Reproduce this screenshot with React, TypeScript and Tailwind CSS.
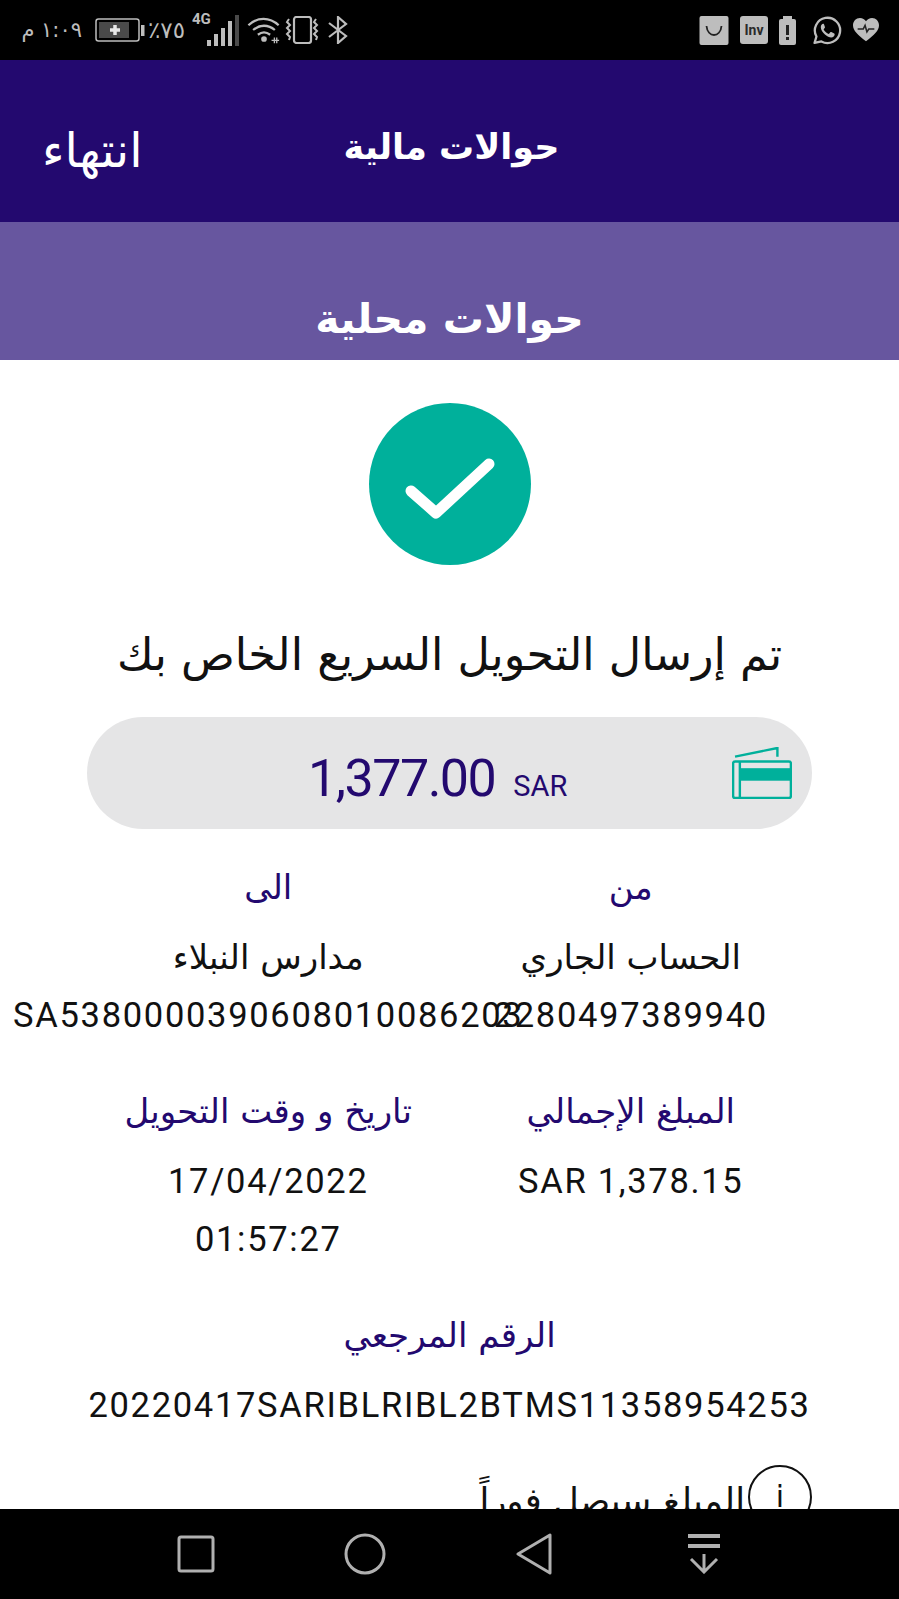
const ar = "font-['DejaVu_Sans',sans-serif]";
const din = "font-['Roboto','DejaVu_Sans',sans-serif]";

function StatusLeft() {
  return (
    <div className="flex items-center">
      <span className={`${ar} ml-[20px] w-[62px] text-[21px] leading-none text-[#bdbdbd] whitespace-nowrap`} dir="rtl">١:٠٩ م</span>
      <svg className="ml-[13px] shrink-0" width="50" height="26" viewBox="0 0 50 26">
        <rect x="1" y="2" width="43" height="22" rx="2.5" fill="none" stroke="#bdbdbd" strokeWidth="1.5" />
        <rect x="4" y="5" width="30" height="16" fill="#4a4a4a" />
        <path d="M20 8v10M15 13h10" stroke="#e8e8e8" strokeWidth="3.5" />
        <rect x="46" y="8" width="3.5" height="11" fill="#bdbdbd" />
      </svg>
      <span className={`${ar} ml-[3px] w-[42px] text-[23px] leading-none text-[#bdbdbd] whitespace-nowrap`}>٪٧٥</span>
      <div className="relative ml-[2px] h-[32px] w-[46px] shrink-0">
        <span className={`${din} absolute left-0 top-[-2px] text-[15px] font-bold leading-none text-[#bdbdbd]`}>4G</span>
        <svg className="absolute left-0 top-0" width="48" height="32" viewBox="0 0 48 32">
          <rect x="15" y="26" width="4" height="6" fill="#bdbdbd" />
          <rect x="22" y="20" width="4" height="12" fill="#bdbdbd" />
          <rect x="29" y="14" width="4" height="18" fill="#bdbdbd" />
          <rect x="36" y="7" width="4" height="25" fill="#bdbdbd" />
          <rect x="43" y="1" width="4" height="31" fill="#4a4a4a" />
        </svg>
      </div>
      <svg className="ml-[9px] shrink-0" width="34" height="28" viewBox="0 0 36 28" fill="none" stroke="#bdbdbd" strokeWidth="2.4">
        <path d="M1.500 9C11 0 24 0 33.500 9M6.500 14c7-6 16-6 23 0M11.500 19c4-3 9-3 13 0" />
        <circle cx="18" cy="23.500" r="3" fill="#bdbdbd" stroke="none" />
        <path d="M26 25h8M29 22v6M31.500 22v6" strokeWidth="1.400" />
      </svg>
      <svg className="ml-[4px] shrink-0" width="36" height="28" viewBox="0 0 36 28" fill="none" stroke="#bdbdbd" strokeWidth="2">
        <rect x="9" y="1" width="17" height="26" rx="2.500" strokeWidth="2.200" />
        <path d="M4 3l-2 3 3 3-3 3 3 3-3 3 3 3-1 3M31 3l-2 3 3 3-3 3 3 3-3 3 3 3-1 3" />
      </svg>
      <svg className="ml-[7px] shrink-0" width="20" height="28" viewBox="0 0 20 28" fill="none" stroke="#bdbdbd" strokeWidth="2.200">
        <path d="M1 7l17 13-8 7V1l8 7L1 21" />
      </svg>
    </div>
  );
}

function StatusRight() {
  return (
    <div className="mr-[20px] flex items-center gap-[11px]">
      <svg width="30" height="29" viewBox="0 0 29 29">
        <rect width="29" height="29" rx="2" fill="#bdbdbd" />
        <path d="M7 10c1 12 14 12 15 0" fill="none" stroke="#222" strokeWidth="1.800" />
      </svg>
      <div className={`${din} flex h-[28px] w-[28px] items-center justify-center rounded-[3px] bg-[#bdbdbd] text-[14px] font-bold leading-none text-[#2a2a2a]`}>Inv</div>
      <svg width="17" height="29" viewBox="0 0 17 29">
        <rect x="0" y="3" width="17" height="26" rx="2" fill="#bdbdbd" />
        <rect x="4" y="0" width="9" height="3" fill="#bdbdbd" />
        <rect x="7" y="9" width="3" height="10" fill="#222" />
        <rect x="7" y="21" width="3" height="3" fill="#222" />
      </svg>
      <svg className="ml-[5px]" width="30" height="29" viewBox="0 0 28 28" fill="none">
        <path d="M2 26l1.800-6.200A12.200 12.200 0 1 1 8.600 24.600z" stroke="#bdbdbd" strokeWidth="2.200" strokeLinejoin="round" />
        <path d="M10.200 7.600c-.9 0-2.200 1.200-2.200 3.200 0 2.400 1.700 4.900 4 7 2.200 2 4.300 2.900 6 2.900 2 0 3.400-1.500 3.400-2.800 0-.5-.1-.8-.4-1l-2.800-1.400c-.4-.2-.7-.1-1 .2l-1.200 1.400c-.2.300-.5.300-.9.100-1.700-.8-3.200-2.200-4.200-3.900-.2-.3-.1-.6.100-.8l.9-1.100c.2-.3.200-.6.100-.9L11.100 8c-.2-.3-.5-.4-.9-.4z" fill="#bdbdbd" />
      </svg>
      <svg width="26" height="26" viewBox="0 0 28 26">
        <path d="M14 25C5 18 0 13.500 0 7.800 0 3.400 3.300 0 7.500 0 10.200 0 12.700 1.400 14 3.600 15.300 1.400 17.800 0 20.500 0 24.700 0 28 3.400 28 7.800 28 13.500 23 18 14 25z" fill="#bdbdbd" />
        <path d="M5 12h6l2-4 2 7 2-3h6" fill="none" stroke="#222" strokeWidth="1.700" />
      </svg>
    </div>
  );
}

function Info({ label, lines }: { label: string; lines: string[] }) {
  return (
    <div className="flex min-w-0 flex-col items-center">
      <div className={`${ar} h-[40px] text-[34px] leading-[40px] text-[#23096f] whitespace-nowrap`} dir="rtl">{label}</div>
      <div className="mt-[21px] flex w-full flex-col items-center">
        {lines.map((l) => {
          const latin = /[a-zA-Z0-9]/.test(l);
          return (
            <div key={l} className="flex h-[58px] w-full items-center justify-center leading-[58px] text-[#111] whitespace-nowrap">
              <span className={latin ? `${din} text-[34.5px] tracking-[1.7px]` : `${ar} text-[34px]`} dir={latin ? "ltr" : "rtl"}>{l}</span>
            </div>
          );
        })}
      </div>
    </div>
  );
}

export default function App() {
  return (
    <div className="flex h-[1599px] w-[899px] flex-col overflow-hidden bg-white">
      <div className="flex h-[60px] shrink-0 items-center justify-between bg-black">
        <StatusLeft />
        <StatusRight />
      </div>
      <div className="grid h-[162px] shrink-0 grid-cols-[1fr_auto_1fr] items-center bg-[#23096f] text-white">
        <div className={`${ar} pl-[42px] pt-[18px] text-[48px] leading-none`} dir="ltr">انتهاء</div>
        <div className={`${ar} pl-[4px] pt-[12px] text-[35px] font-bold leading-none`} dir="rtl">حوالات مالية</div>
        <div />
      </div>
      <div className="flex h-[138px] shrink-0 items-end justify-center bg-[#67569f] pb-[20px] text-white">
        <div className={`${ar} text-[41px] font-bold leading-none`} dir="rtl">حوالات محلية</div>
      </div>
      <main className="flex min-h-0 flex-1 flex-col items-center overflow-hidden pt-[43px]">
        <div className="flex h-[162px] w-[162px] shrink-0 items-center justify-center rounded-full bg-[#00b09b] pt-[10px]">
          <svg width="92" height="64" viewBox="0 0 92 64" fill="none">
            <path d="M7 34l25 22L85 7" stroke="white" strokeWidth="11" strokeLinecap="round" strokeLinejoin="round" />
          </svg>
        </div>
        <div className={`${ar} mt-[60px] text-[44.5px] leading-[60px] text-[#111] whitespace-nowrap`} dir="rtl">تم إرسال التحويل السريع الخاص بك</div>
        <div className="mt-[32px] flex h-[112px] w-[725px] shrink-0 items-center rounded-[56px] bg-[#e5e5e6] pl-[221px] pr-[20px]">
          <div className={`${din} flex flex-1 items-baseline gap-[18px] pt-[12px] text-[#23096f]`}>
            <span className="text-[52px] leading-none tracking-[-1.5px]">1,377.00</span>
            <span className="text-[29px] leading-none">SAR</span>
          </div>
          <svg width="60" height="52" viewBox="0 0 62 54" fill="none" stroke="#00b09b" strokeWidth="2.500">
            <path d="M3 10L47 1v9" />
            <rect x="1" y="15" width="60" height="38" rx="2" />
            <rect x="8" y="22" width="53" height="13" fill="#00b09b" stroke="none" />
            <path d="M8 15v38" />
          </svg>
        </div>
        <div className="mt-[38px] grid w-[725px] grid-cols-2">
          <Info label="الى" lines={["مدارس النبلاء", "SA5380000390608010086203"]} />
          <Info label="من" lines={["الحساب الجاري", "2280497389940"]} />
        </div>
        <div className="mt-[47px] grid w-[725px] grid-cols-2">
          <Info label="تاريخ و وقت التحويل" lines={["17/04/2022", "01:57:27"]} />
          <Info label="المبلغ الإجمالي" lines={["SAR 1,378.15"]} />
        </div>
        <div className="mt-[47px] flex w-[725px] justify-center">
          <Info label="الرقم المرجعي" lines={["20220417SARIBLRIBL2BTMS11358954253"]} />
        </div>
        <div className="mt-[31px] flex w-[725px] shrink-0 items-start justify-end gap-[3px]">
          <span className={`${ar} pt-[6px] text-[35.5px] leading-[60px] text-[#111] whitespace-nowrap`} dir="rtl">المبلغ سيصل فوراً</span>
          <div className={`${ar} flex h-[64px] w-[64px] shrink-0 items-center justify-center rounded-full border-2 border-[#111] text-[30px] leading-none text-[#111]`}>i</div>
        </div>
      </main>
      <div className="flex h-[90px] shrink-0 items-center bg-black pl-[177px]">
        <svg width="38" height="38" viewBox="0 0 38 38" fill="none" stroke="#b0b0b0" strokeWidth="3">
          <rect x="2" y="2" width="34" height="34" rx="2" />
        </svg>
        <svg className="ml-[129px]" width="42" height="42" viewBox="0 0 42 42" fill="none" stroke="#b0b0b0" strokeWidth="3">
          <circle cx="21" cy="21" r="19" />
        </svg>
        <svg className="ml-[130px]" width="36" height="42" viewBox="0 0 36 42" fill="none" stroke="#b0b0b0" strokeWidth="3" strokeLinejoin="round">
          <path d="M34 2v38L2 21z" />
        </svg>
        <svg className="ml-[135px]" width="34" height="40" viewBox="0 0 34 40" fill="none" stroke="#b0b0b0" strokeWidth="3">
          <path d="M1 2h32M1 12h32" strokeWidth="4" />
          <path d="M17 20v18M4 25l13 13 13-13" />
        </svg>
      </div>
    </div>
  );
}
